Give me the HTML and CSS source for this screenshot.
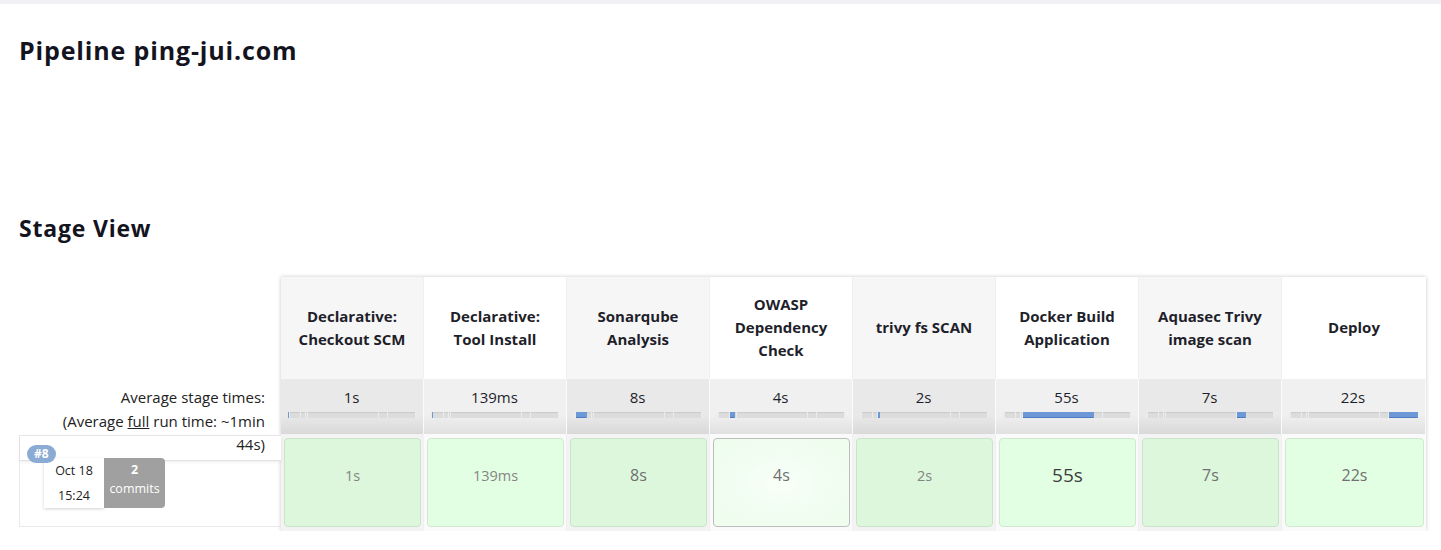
FILE: index.html
```html
<!DOCTYPE html>
<html>
<head>
<meta charset="utf-8">
<link rel="stylesheet" href="styles.css">
</head>
<body>
<div class="topbar"></div>
<main class="main">
  <h1 class="title">Pipeline ping-jui.com</h1>
  <h2 class="subtitle">Stage View</h2>
  <div class="stageview">
    <div class="leftcol">
      <div class="left-head"></div>
      <div class="left-avg">
        <div>Average stage times:</div>
        <div>(Average <u>full</u> run time: ~1min</div>
        <div>44s)</div>
      </div>
      <div class="build">
        <div class="build-band"></div>
        <span class="badge">#8</span>
        <div class="build-info">
          <div class="date"><div>Oct 18</div><div>15:24</div></div>
          <div class="commits"><div class="cnum">2</div><div>commits</div></div>
        </div>
      </div>
    </div>
    <div class="table">
      <div class="row head">
        <div class="cell odd">Declarative:<br>Checkout SCM</div>
        <div class="cell">Declarative:<br>Tool Install</div>
        <div class="cell odd">Sonarqube<br>Analysis</div>
        <div class="cell">OWASP<br>Dependency<br>Check</div>
        <div class="cell odd">trivy fs SCAN</div>
        <div class="cell">Docker Build<br>Application</div>
        <div class="cell odd">Aquasec Trivy<br>image scan</div>
        <div class="cell">Deploy</div>
      </div>
      <div class="row avg">
        <div class="cell odd"><div class="avgtime">1s</div><div class="bar" data-i="0"></div></div>
        <div class="cell"><div class="avgtime">139ms</div><div class="bar" data-i="1"></div></div>
        <div class="cell odd"><div class="avgtime">8s</div><div class="bar" data-i="2"></div></div>
        <div class="cell"><div class="avgtime">4s</div><div class="bar" data-i="3"></div></div>
        <div class="cell odd"><div class="avgtime">2s</div><div class="bar" data-i="4"></div></div>
        <div class="cell"><div class="avgtime">55s</div><div class="bar" data-i="5"></div></div>
        <div class="cell odd"><div class="avgtime">7s</div><div class="bar" data-i="6"></div></div>
        <div class="cell"><div class="avgtime">22s</div><div class="bar" data-i="7"></div></div>
      </div>
      <div class="row body">
        <div class="cell odd"><div class="box"><span class="t1">1s</span></div></div>
        <div class="cell"><div class="box"><span class="t1">139ms</span></div></div>
        <div class="cell odd"><div class="box"><span class="t2">8s</span></div></div>
        <div class="cell"><div class="box sel"><span class="t2">4s</span></div></div>
        <div class="cell odd"><div class="box"><span class="t1">2s</span></div></div>
        <div class="cell"><div class="box"><span class="t3">55s</span></div></div>
        <div class="cell odd"><div class="box"><span class="t2">7s</span></div></div>
        <div class="cell"><div class="box"><span class="t2">22s</span></div></div>
      </div>
    </div>
  </div>
</main>
<script src="bars.js"></script>
</body>
</html>
```

FILE: bars.js
```js
(function () {
  var d = [1, 0.139, 8, 4, 2, 55, 7, 22];
  var total = d.reduce(function (a, b) { return a + b; }, 0);
  var bars = document.querySelectorAll('.bar');
  bars.forEach(function (bar) {
    var active = parseInt(bar.getAttribute('data-i'), 10);
    d.forEach(function (v, i) {
      var s = document.createElement('span');
      s.className = 'seg' + (i === active ? ' on' : '');
      s.style.width = (v / total * 100) + '%';
      bar.appendChild(s);
    });
  });
})();
```

FILE: styles.css
```css
html, body {
  margin: 0;
  padding: 0;
  background: #fff;
}
body {
  font-family: "Open Sans", "Noto Sans", "DejaVu Sans", sans-serif;
  color: #1f1f2b;
}
.topbar {
  height: 4px;
  background: #f1f1f3;
}
.main {
  padding: 0 0 0 19px;
}
.title {
  margin: 0;
  padding-top: 31px;
  font-size: 25px;
  line-height: 30px;
  font-weight: 700;
  color: #14141f;
  letter-spacing: 0.85px;
}
.subtitle {
  margin: 0;
  padding-top: 149px;
  font-size: 23px;
  line-height: 28px;
  font-weight: 700;
  color: #14141f;
  letter-spacing: 0.8px;
}
.stageview {
  display: flex;
  margin-top: 35px;
}
.leftcol {
  width: 262px;
  flex: none;
  font-size: 15px;
  color: #222;
}
.left-head {
  height: 102px;
}
.left-avg {
  height: 56px;
  box-sizing: border-box;
  padding: 7px 16px 0 0;
  text-align: right;
  line-height: 23.5px;
  position: relative;
  z-index: 2;
}
.build {
  position: relative;
  height: 92px;
  box-sizing: border-box;
  border: 1px solid #e9e9e9;
  border-right: none;
}
.build-band {
  height: 24px;
  border-bottom: 1px solid #e2e2e2;
  box-shadow: 0 1px 3px rgba(0,0,0,0.08);
  background: #fff;
}
.badge {
  position: absolute;
  left: 7px;
  top: 9px;
  padding: 0 7px;
  height: 18px;
  line-height: 18px;
  border-radius: 9px;
  background: #8aabd3;
  color: #fff;
  font-size: 12px;
  font-weight: 700;
  z-index: 3;
}
.build-info {
  display: flex;
  margin: -3px 0 0 24px;
  font-size: 12.5px;
  position: relative;
  z-index: 2;
}
.date {
  width: 60px;
  height: 50px;
  background: #fff;
  box-shadow: 0 1px 3px rgba(0,0,0,0.18);
  text-align: center;
  line-height: 25px;
  color: #222;
}
.commits {
  width: 61px;
  height: 50px;
  background: #a0a0a0;
  border-radius: 0 4px 4px 0;
  color: #fff;
  text-align: center;
  line-height: 19px;
  padding-top: 2px;
  box-sizing: border-box;
}
.cnum {
  font-weight: 700;
}
.table {
  width: 1145px;
  flex: none;
  box-shadow: 0 0 4px rgba(0,0,0,0.22);
}
.row {
  display: flex;
}
.cell {
  width: 143px;
  flex: none;
  box-sizing: border-box;
  border-right: 1px solid #f0f0f0;
}
.cell:last-child {
  width: 144px;
  border-right: none;
}
.head .cell {
  height: 102px;
  display: flex;
  align-items: center;
  justify-content: center;
  text-align: center;
  font-size: 15px;
  font-weight: 700;
  line-height: 23px;
  background: #fff;
  color: #1f1f2b;
  padding-bottom: 1px;
}
.head .cell.odd {
  background: #f6f6f6;
}
.avg .cell {
  height: 55px;
  background: linear-gradient(#f0f0f0 0%, #f0f0f0 65%, #e0e0e0 100%);
  padding: 9px 8px 0 7px;
  text-align: center;
  font-size: 15px;
  color: #1f1f2b;
  border-right: 1px solid #fafafa;
}
.avg .cell.odd {
  background: linear-gradient(#e9e9e9 0%, #e9e9e9 65%, #d9d9d9 100%);
}
.avgtime {
  line-height: 18px;
}
.bar {
  display: flex;
  height: 6px;
  margin-top: 6px;
  background: #dcdcdc;
  box-shadow: inset 0 1px 1px rgba(0,0,0,0.08);
}
.seg {
  display: block;
  height: 100%;
  box-sizing: border-box;
  border-right: 1px solid #ebebeb;
  min-width: 1px;
  flex: none;
}
.seg.on {
  background: #6d98d8;
  border-right-color: #6d98d8;
  box-shadow: inset 0 -1px 0 #4d7ac0;
}
.body .cell {
  height: 97px;
  padding: 4px 2px 4px 3px;
  background: #fafafa;
}
.body .cell.odd {
  background: #f3f3f3;
}
.box {
  height: 100%;
  box-sizing: border-box;
  border: 1px solid #cfe9cf;
  border-radius: 4px;
  background: #e3ffe3;
  display: flex;
  align-items: center;
  justify-content: center;
  padding-bottom: 15px;
}
.odd .box {
  background: #dcf7dc;
  border-color: #c9e4c9;
}
.box.sel {
  border: 1px solid #bdbdbd;
  background: radial-gradient(ellipse at center, #f8fff8 0%, #f0fdf0 60%, #eefdee 100%);
}
.t1 {
  font-size: 14.5px;
  color: #858585;
}
.t2 {
  font-size: 16px;
  color: #707070;
}
.t3 {
  font-size: 19px;
  color: #3d3d3d;
}
```
